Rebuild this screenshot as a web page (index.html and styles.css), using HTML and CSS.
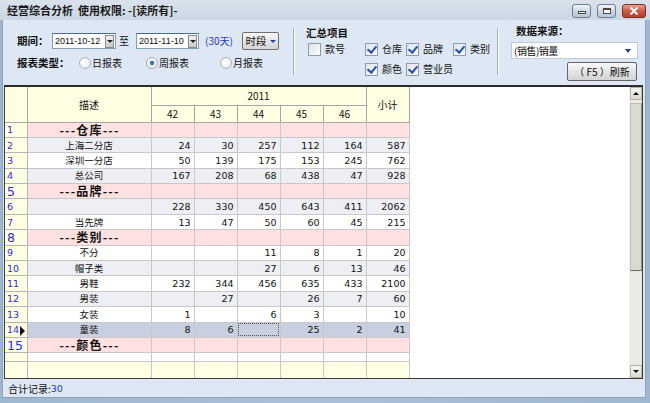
FILE: index.html
```html
<!DOCTYPE html>
<html>
<head>
<meta charset="utf-8">
<link rel="stylesheet" href="styles.css">
</head>
<body>
<div class="window">
  <div class="titlebar">
    <span class="title">经营综合分析&nbsp;&nbsp;使用权限: -[读所有]-</span>
    <div class="winbtns">
      <span class="wbtn"><i class="min"></i></span>
      <span class="wbtn"><i class="max"></i></span>
      <span class="wbtn close"><svg width="10" height="8" viewBox="0 0 10 8"><path d="M1.5 0.5 L8.5 7.5 M8.5 0.5 L1.5 7.5" stroke="#fff" stroke-width="2"/></svg></span>
    </div>
  </div>
  <div class="content">
    <div class="toolbar">
      <div class="sec period">
        <div class="line l1">
          <span class="lbl lp">期间：</span>
          <span class="combo c1"><span class="val">2011-10-12</span><span class="drop"><i></i></span></span>
          <span class="to">至</span>
          <span class="combo c2"><span class="val">2011-11-10</span><span class="drop"><i></i></span></span>
          <span class="days">(30天)</span>
          <span class="btn seg">时段 <b class="caret"></b></span>
        </div>
        <div class="line l2">
          <span class="lbl lt">报表类型：</span>
          <span class="radio r1"><i class="rb"></i>日报表</span>
          <span class="radio r2"><i class="rb on"></i>周报表</span>
          <span class="radio r3"><i class="rb"></i>月报表</span>
        </div>
      </div>
      <div class="sep"></div>
      <div class="sec summary">
        <div class="lbl">汇总项目</div>
        <div class="checks">
          <span class="cb"><i class="box"></i>款号</span>
          <span class="cb"><i class="box on"></i>仓库</span>
          <span class="cb"><i class="box on"></i>品牌</span>
          <span class="cb"><i class="box on"></i>类别</span>
          <span class="cb c-color"><i class="box on"></i>颜色</span>
          <span class="cb"><i class="box on"></i>营业员</span>
        </div>
      </div>
      <div class="sep"></div>
      <div class="sec source">
        <div class="lbl">数据来源：</div>
        <div class="combo c3"><span class="val">(销售)销量</span><span class="arrow"></span></div>
        <div class="btn refresh">（ F5 ）刷新</div>
      </div>
    </div>

    <div class="gridwrap">
      <table class="grid">
        <colgroup><col class="w-rh"><col class="w-desc"><col class="w-n"><col class="w-n"><col class="w-n"><col class="w-n"><col class="w-n"><col class="w-n"></colgroup>
        <thead>
          <tr class="h1"><th rowspan="2" class="corner"></th><th rowspan="2">描述</th><th colspan="5">2011</th><th rowspan="2">小计</th></tr>
          <tr class="h2"><th>42</th><th>43</th><th>44</th><th>45</th><th>46</th></tr>
        </thead>
        <tbody>
          <tr class="grp"><td class="rh">1</td><td class="d">---仓库---</td><td></td><td></td><td></td><td></td><td></td><td></td></tr>
          <tr class="alt"><td class="rh">2</td><td class="d">上海二分店</td><td>24</td><td>30</td><td>257</td><td>112</td><td>164</td><td>587</td></tr>
          <tr><td class="rh">3</td><td class="d">深圳一分店</td><td>50</td><td>139</td><td>175</td><td>153</td><td>245</td><td>762</td></tr>
          <tr class="alt"><td class="rh">4</td><td class="d">总公司</td><td>167</td><td>208</td><td>68</td><td>438</td><td>47</td><td>928</td></tr>
          <tr class="grp"><td class="rh big">5</td><td class="d">---品牌---</td><td></td><td></td><td></td><td></td><td></td><td></td></tr>
          <tr class="alt"><td class="rh">6</td><td class="d"></td><td>228</td><td>330</td><td>450</td><td>643</td><td>411</td><td>2062</td></tr>
          <tr><td class="rh">7</td><td class="d">当先牌</td><td>13</td><td>47</td><td>50</td><td>60</td><td>45</td><td>215</td></tr>
          <tr class="grp"><td class="rh big">8</td><td class="d">---类别---</td><td></td><td></td><td></td><td></td><td></td><td></td></tr>
          <tr><td class="rh">9</td><td class="d">不分</td><td></td><td></td><td>11</td><td>8</td><td>1</td><td>20</td></tr>
          <tr class="alt"><td class="rh">10</td><td class="d">帽子类</td><td></td><td></td><td>27</td><td>6</td><td>13</td><td>46</td></tr>
          <tr><td class="rh">11</td><td class="d">男鞋</td><td>232</td><td>344</td><td>456</td><td>635</td><td>433</td><td>2100</td></tr>
          <tr class="alt"><td class="rh">12</td><td class="d">男装</td><td></td><td>27</td><td></td><td>26</td><td>7</td><td>60</td></tr>
          <tr><td class="rh">13</td><td class="d">女装</td><td>1</td><td></td><td>6</td><td>3</td><td></td><td>10</td></tr>
          <tr class="sel"><td class="rh">14<span class="ptr"></span></td><td class="d">童装</td><td>8</td><td>6</td><td class="focus"></td><td>25</td><td>2</td><td>41</td></tr>
          <tr class="grp"><td class="rh big">15</td><td class="d">---颜色---</td><td></td><td></td><td></td><td></td><td></td><td></td></tr>
          <tr class="thin"><td class="rh"></td><td></td><td></td><td></td><td></td><td></td><td></td><td></td></tr>
          <tr class="foot"><td class="rh"></td><td></td><td></td><td></td><td></td><td></td><td></td><td></td></tr>
        </tbody>
      </table>
      <div class="blank"></div>
      <div class="vscroll">
        <span class="sbtn"><i class="up"></i></span>
        <span class="thumb"></span>
        <span class="track"></span>
        <span class="sbtn"><i class="down"></i></span>
      </div>
    </div>

    <div class="status">合计记录:<span class="cnt">30</span></div>
  </div>
</div>
</body>
</html>
```
FILE: styles.css
```css
* { box-sizing: border-box; }
body {
  margin: 0;
  width: 650px;
  height: 403px;
  overflow: hidden;
  font-family: "Noto Sans CJK SC", "Noto Sans", sans-serif;
  font-size: 10px;
  color: #111;
  background: #5f7a97;
}
.window {
  width: 650px;
  height: 403px;
  display: flex;
  flex-direction: column;
  background: linear-gradient(to right, #9fb6cf, #aac0d8 50%, #9fb6cf);
  padding: 0 4px 5px 2px;
}
.titlebar {
  height: 20px;
  flex: none;
  display: flex;
  align-items: center;
  justify-content: space-between;
  padding-left: 7px;
  margin: 0 -4px 0 -2px;
  background: linear-gradient(#d9e2ec, #cbd7e4);
}
.title { font-weight: bold; font-size: 11px; color: #1a1a1a; white-space: nowrap; }
.winbtns { display: flex; gap: 6px; padding-right: 4px; padding-top: 1px; }
.wbtn {
  width: 19px; height: 14px;
  border: 1px solid #6b7d93;
  border-radius: 3px;
  background: linear-gradient(#f2f6fa, #c9d5e2 55%, #b8c7d8);
  display: flex; align-items: center; justify-content: center;
}
.wbtn.close { width: 24px; border-color: #7a2b22; background: linear-gradient(#e9a395, #cd5a45 50%, #b8402c); }
.min { display: block; width: 8px; height: 3px; border: 1px solid #444; background: #fff; margin-top: 4px; }
.max { display: block; width: 8px; height: 6px; border: 1px solid #444; border-top-width: 2px; background: #fff; }

.content {
  flex: 1;
  display: flex;
  flex-direction: column;
  background: #dee8f4;
  border-left: 1px solid #8ea3bb;
  border-right: 1px solid #8ea3bb;
  border-bottom: 1px solid #8ea3bb;
  padding: 0 2px 0 3px;
}

/* toolbar */
.toolbar { height: 65px; flex: none; display: flex; line-height: 14px; white-space: nowrap; }
.toolbar * { flex-shrink: 0; }
.sec { display: flex; flex-direction: column; }
.lbl { font-weight: bold; font-size: 10.5px; }
.period { width: 287px; padding: 12px 0 0 11px; }
.line { display: flex; align-items: center; }
.l1 { height: 18px; }
.l2 { height: 16px; margin-top: 5px; }
.lp { width: 35px; }
.lt { width: 62px; }
.combo {
  position: relative;
  height: 16px;
  background: #fff;
  border: 1px solid #7f9db9;
  border-top-color: #4d6d8e;
  display: flex; align-items: center;
  font-size: 9px;
  font-family: "Liberation Sans", sans-serif;
}
.combo .val { padding-left: 2px; flex: 1; white-space: nowrap; }
.c1 { width: 64px; }
.c2 { width: 63px; }
.drop {
  width: 9px; height: 13px; margin-right: 1px;
  background: linear-gradient(#f3f3f3, #c9c9c9);
  border: 1px solid #8a8a8a;
  display: flex; align-items: center; justify-content: center;
}
.drop i, .caret, .combo .arrow {
  display: block; width: 0; height: 0;
  border-left: 3px solid transparent; border-right: 3px solid transparent;
  border-top: 3px solid #222;
}
.to { margin: 0 7px 0 3px; font-size: 10px; width: 10px; }
.days { color: #2436d6; margin-left: 6px; width: 30px; }
.btn {
  height: 18px;
  border: 1px solid #707070;
  border-radius: 2px;
  background: linear-gradient(#fafafa, #e4e4e4 50%, #d4d4d4);
  display: flex; align-items: center; justify-content: center;
}
.seg { width: 37px; margin-left: 7px; gap: 3px; font-size: 10.5px; }
.caret { border-top-color: #2a3ea8; }
.radio { display: flex; align-items: center; gap: 1px; }
.r1 { width: 67px; }
.r2 { width: 74px; }
.rb {
  display: inline-block; width: 12px; height: 12px; border-radius: 50%;
  border: 1px solid #aab2bd;
  background: radial-gradient(circle at 40% 40%, #fff, #e2e4e8);
  position: relative;
}
.rb.on::after {
  content: ""; position: absolute; left: 3px; top: 3px; width: 4px; height: 4px; border-radius: 50%;
  background: #3a74b8; box-shadow: 0 0 1px #1c4f8e;
}

.sep { width: 2px; flex: none; margin: 8px 0 10px; border-left: 1px solid #a4adb8; border-right: 1px solid #fff; }
.summary { width: 202px; padding: 6px 0 0 11px; }
.checks {
  display: grid;
  grid-template-columns: 57px 41px 47px auto;
  row-gap: 4px;
  margin-top: 1px;
  margin-left: 2px;
}
.cb { display: flex; align-items: center; gap: 4px; height: 16px; }
.c-color { grid-column: 2; }
.box {
  display: inline-block; width: 13px; height: 13px;
  border: 1px solid #8d9bb0;
  background: linear-gradient(135deg, #dfe3ea, #fcfcfc);
  position: relative;
}
.box.on::after {
  content: ""; position: absolute; left: 3px; top: 0px; width: 4px; height: 7px;
  border: solid #2850b6; border-width: 0 2px 2px 0; transform: rotate(40deg);
}
.source { flex: 1; padding: 4px 0 0 12px; }
.source .lbl { margin-left: 5px; }
.c3 { width: 127px; height: 17px; margin-top: 4px; border-color: #c2cad6; font-family: "Noto Sans CJK SC", sans-serif; font-size: 10px; }
.c3 .val { padding-left: 2px; letter-spacing: -0.5px; }
.c3 .arrow { margin-right: 6px; border-top-color: #1c3e9a; border-top-width: 4px; }
.refresh { width: 70px; height: 19px; margin: 3px 0 0 56px; font-size: 10px; border-color: #666; }

/* grid */
.gridwrap {
  height: 294px;
  flex: none;
  display: flex;
  background: #fff;
  border: 1px solid #3a3a3a;
  border-top: 2px solid #2c2c2c;
  margin-left: -2px;
}
.grid {
  border-collapse: collapse;
  table-layout: fixed;
  width: 404px;
  flex: none;
  align-self: flex-start;
  font-size: 10px;
}
.w-rh { width: 22px; }
.w-desc { width: 124px; }
.w-n { width: 43px; }
.grid th {
  background: #ffffe3;
  font-weight: normal;
  border: 1px solid #a6a6a6;
  border-top: none;
  padding: 0;
  font-size: 10px;
}
.grid th.corner { border-left: none; }
.h1 th { height: 18px; }
.h2 th { height: 17px; }
.grid td {
  height: 15.4px;
  padding: 0 3px 0 0;
  border: 1px solid #c8c8c8;
  text-align: right;
  line-height: 13px;
  white-space: nowrap;
  font-family: "DejaVu Sans", sans-serif;
  font-size: 9.5px;
}
.grid td.d { text-align: center; font-family: "Noto Sans CJK SC", sans-serif; font-size: 9.5px; padding: 0; }
.grid td.rh {
  background: #ffffe3;
  color: #1f2fe0;
  text-align: left;
  padding-left: 2px;
  border-left: none;
  border-color: #b5b5b5;
  font-size: 9.5px;
  position: relative;
}
.grid td.rh.big { font-size: 12.5px; }
.grp td { background: #ffe1e1; }
.grid .grp td.d { font-weight: bold; font-size: 12px; line-height: 12px; letter-spacing: 1.2px; text-indent: 1px; }
.alt td { background: #eeeff4; }
.sel td { background: #c7cfe0; }
.grid td.focus { outline: 1px dotted #555; outline-offset: -2px; background: #c7cfe0; }
.ptr {
  position: absolute; right: 2px; top: 3px; width: 0; height: 0;
  border-top: 5px solid transparent; border-bottom: 5px solid transparent; border-left: 5px solid #111;
}
.grid tr.thin td { height: 9px; background: #fff; }
.grid tr.thin td.rh { background: #ffffe3; }
.grid tr.foot td { height: 16px; background: #ffffe6; border-bottom: none; }
.blank { flex: 1; }
.vscroll {
  width: 13px; flex: none;
  display: flex; flex-direction: column;
  background: #ece9e2;
  border-left: 1px solid #f5f3ee;
}
.sbtn {
  height: 13px; flex: none;
  background: linear-gradient(#f7f6f2, #dcd8ce);
  border: 1px solid #b9b4a8;
  display: flex; align-items: center; justify-content: center;
}
.sbtn .up { width: 0; height: 0; border-left: 3px solid transparent; border-right: 3px solid transparent; border-bottom: 3px solid #111; }
.sbtn .down { width: 0; height: 0; border-left: 3px solid transparent; border-right: 3px solid transparent; border-top: 3px solid #111; }
.thumb {
  height: 168px; flex: none;
  margin-top: 3px;
  background: #dcd9d1;
  border: 1px solid #c3beb3;
  border-right-color: #8e8a80;
  border-bottom-color: #6f6c65;
}
.track { flex: 1; }
.status {
  flex: 1;
  display: flex; align-items: center;
  padding-left: 3px;
  font-size: 10px;
  margin-left: -1px;
}
.cnt { color: #2436d6; font-family: "DejaVu Sans", sans-serif; font-size: 9.5px; }
```
